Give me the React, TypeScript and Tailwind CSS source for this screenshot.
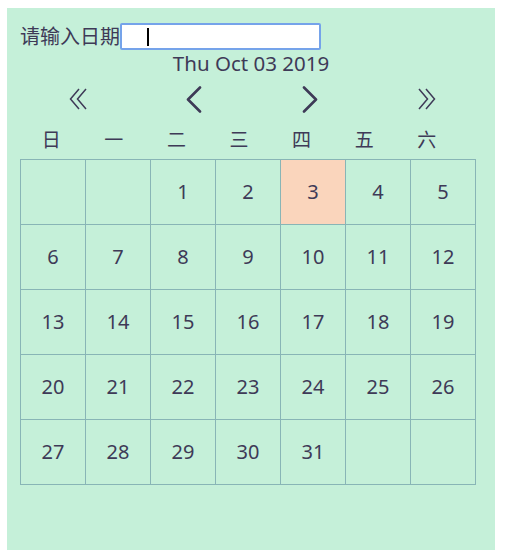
import React from 'react'

const weekdays = ['日', '一', '二', '三', '四', '五', '六']

const days: (number | null)[] = [
  null, null, 1, 2, 3, 4, 5,
  6, 7, 8, 9, 10, 11, 12,
  13, 14, 15, 16, 17, 18, 19,
  20, 21, 22, 23, 24, 25, 26,
  27, 28, 29, 30, 31, null, null,
]

function DoubleChevron({ dir }: { dir: 'left' | 'right' }) {
  const pts = dir === 'left'
    ? ['10,1 1.5,11 10,21', '17,1 8.5,11 17,21']
    : ['2,1 10.5,11 2,21', '9,1 17.5,11 9,21']
  return (
    <svg width="19" height="22" viewBox="0 0 19 22" fill="none" stroke="#3e3a57" strokeWidth="1.5">
      {pts.map((p) => <polyline key={p} points={p} />)}
    </svg>
  )
}

function Chevron({ dir }: { dir: 'left' | 'right' }) {
  const p = dir === 'left' ? '14,1.5 2,13.5 14,25.5' : '2,1.5 14,13.5 2,25.5'
  return (
    <svg width="16" height="27" viewBox="0 0 16 27" fill="none" stroke="#3e3a57" strokeWidth="2.6" strokeLinecap="round" strokeLinejoin="round">
      <polyline points={p} />
    </svg>
  )
}

export default function App() {
  const selected = 3
  return (
    <div className="pl-[7px] pt-[8px] font-['Noto_Sans','Noto_Sans_CJK_SC',sans-serif] text-[#3e3a57]">
      <div className="w-[488px] h-[542px] bg-[#c5f0d9] px-[13px] pt-[15px]">
        <div className="flex items-center h-[27px]">
          <span className="text-[20px] leading-none">请输入日期</span>
          <div className="relative">
            <input className="block w-[201px] h-[27px] border-2 border-[#75a3ea] rounded-[2px] bg-white outline-none" readOnly />
            <span className="absolute left-[27px] top-[5px] w-[2px] h-[18px] bg-black" />
          </div>
        </div>
        <div className="h-[26px] text-center text-[20.5px] leading-[26px]">Thu Oct 03 2019</div>
        <div className="grid grid-cols-4 w-[464px] h-[46px] items-center">
          <div className="flex justify-center"><DoubleChevron dir="left" /></div>
          <div className="flex justify-center"><Chevron dir="left" /></div>
          <div className="flex justify-center"><Chevron dir="right" /></div>
          <div className="flex justify-center"><DoubleChevron dir="right" /></div>
        </div>
        <div className="grid grid-cols-7 w-[438px] h-[37px] items-center text-center text-[19px] leading-none">
          {weekdays.map((w) => <span key={w}>{w}</span>)}
        </div>
        <div className="grid grid-cols-[repeat(7,64px)] gap-px p-px bg-[#88b5b6] w-max">
          {days.map((d, i) => (
            <div
              key={i}
              className={`h-[64px] flex items-center justify-center text-[20px] ${d === selected ? 'bg-[#fad5bc]' : 'bg-[#c5f0d9]'}`}
            >
              {d ?? ''}
            </div>
          ))}
        </div>
      </div>
    </div>
  )
}
